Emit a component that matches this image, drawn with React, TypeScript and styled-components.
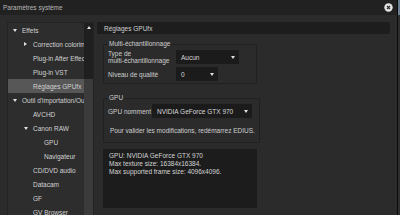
import styled, { createGlobalStyle } from "styled-components";

const Global = createGlobalStyle`
    html, body {
        margin: 0;
        padding: 0;
        background: #000;
    }
    * {
        box-sizing: border-box;
    }
`;

const Screen = styled.div`
    width: 400px;
    height: 215px;
    overflow: hidden;
    display: flex;
    font-family: "Liberation Sans", Arial, sans-serif;
    font-size: 6.5px;
    color: #cfcfcf;
`;

const Window = styled.div`
    width: 397px;
    height: 100%;
    display: flex;
    flex-direction: column;
    background: #2b2b2b;
`;

const Edge = styled.div`
    flex: 1;
    display: flex;
    flex-direction: column;
    border-left: 1px solid #0c0c0c;
    background: #2e2e2e;
`;

const EdgeSky = styled.div`
    height: 15px;
    background: #6d8093;
`;

const TitleBar = styled.div`
    height: 15px;
    flex-shrink: 0;
    display: flex;
    align-items: center;
    justify-content: space-between;
    padding: 0 4px 0 3px;
    background: #212121;
    color: #b8b8b8;
`;

const Body = styled.div`
    flex: 1;
    display: flex;
    gap: 3px;
    padding: 7px 7px 0 7px;
    min-height: 0;
`;

const Tree = styled.div`
    width: 87px;
    display: flex;
    border: 1px solid #232323;
    border-bottom: none;
    background: #2d2d2d;
`;

const TreeList = styled.div`
    flex: 1;
    min-width: 0;
    display: flex;
    flex-direction: column;
    overflow: hidden;
`;

const TreeRow = styled.div<{ $level: number; $selected?: boolean }>`
    height: 14px;
    flex-shrink: 0;
    display: flex;
    align-items: center;
    padding-left: ${(p) => 5 + p.$level * 11}px;
    white-space: nowrap;
    overflow: hidden;
    background: ${(p) => (p.$selected ? "#575757" : "transparent")};
    color: #d2d2d2;
`;

const Twisty = styled.span`
    width: 9px;
    flex-shrink: 0;
    display: flex;
    align-items: center;
`;

const Caret = styled.span<{ $dir: "down" | "right" | "up" }>`
    width: 0;
    height: 0;
    flex-shrink: 0;
    ${(p) =>
        p.$dir === "down"
            ? "border-left: 2px solid transparent; border-right: 2px solid transparent; border-top: 3px solid #e0e0e0;"
            : p.$dir === "up"
            ? "border-left: 2px solid transparent; border-right: 2px solid transparent; border-bottom: 3px solid #e0e0e0;"
            : "border-top: 2px solid transparent; border-bottom: 2px solid transparent; border-left: 3px solid #e0e0e0;"}
`;

const ScrollBar = styled.div`
    width: 9px;
    flex-shrink: 0;
    display: flex;
    flex-direction: column;
    background: #1f1f1f;
`;

const ScrollArrow = styled.div`
    height: 9px;
    display: flex;
    align-items: center;
    justify-content: center;
`;

const ScrollThumb = styled.div`
    margin-top: 47px;
    flex: 1;
    background: #3b3b3b;
`;

const Panel = styled.div`
    width: 293px;
    display: flex;
    flex-direction: column;
`;

const PanelHeader = styled.div`
    height: 12px;
    display: flex;
    align-items: center;
    padding-left: 7px;
    background: #1d1d1d;
    color: #d0d0d0;
`;

const PanelContent = styled.div`
    width: 160px;
    display: flex;
    flex-direction: column;
    padding: 6px 0 0 6px;
`;

const Group = styled.fieldset<{ $after: number }>`
    margin: 0 0 ${(p) => p.$after}px 0;
    padding: 2px 4px 2px 4px;
    border: 1px solid #202020;
    border-radius: 1px;
    display: flex;
    flex-direction: column;
    gap: 3px;
`;

const Legend = styled.legend`
    padding: 0 1px;
    margin-left: 0;
    color: #cfcfcf;
    line-height: 8px;
`;

const FormRow = styled.div<{ $labelWidth: number }>`
    display: flex;
    align-items: center;
    min-height: 14px;
    & > :first-child {
        width: ${(p) => p.$labelWidth}px;
        flex-shrink: 0;
    }
`;

const Label = styled.div`
    line-height: 7px;
    color: #cfcfcf;
    white-space: nowrap;
`;

const Select = styled.div<{ $width: number }>`
    width: ${(p) => p.$width}px;
    height: 14px;
    display: flex;
    align-items: center;
    justify-content: space-between;
    padding: 0 4px 0 5px;
    background: #1b1b1b;
    border-radius: 1px;
    color: #d8d8d8;
    white-space: nowrap;
`;

const Note = styled.div`
    height: 19px;
    display: flex;
    align-items: center;
    padding-left: 2px;
    white-space: nowrap;
    color: #cfcfcf;
`;

const InfoBox = styled.div`
    height: 59px;
    padding: 3px 6px;
    background: #1c1c1c;
    color: #d4d4d4;
    line-height: 8px;
    white-space: nowrap;
`;

const CloseIcon = () => (
    <svg width="9" height="9" viewBox="0 0 9 9">
        <circle cx="4.5" cy="4.5" r="4.2" fill="#e4e4e4" />
        <path d="M3 3 L6 6 M6 3 L3 6" stroke="#2a2a2a" strokeWidth="1.2" />
    </svg>
);

const treeItems: { label: string; level: number; caret?: "down" | "right"; selected?: boolean }[] = [
    { label: "Effets", level: 0, caret: "down" },
    { label: "Correction colorimétrie", level: 1, caret: "right" },
    { label: "Plug-in After Effects", level: 1 },
    { label: "Plug-in VST", level: 1 },
    { label: "Réglages GPUfx", level: 1, selected: true },
    { label: "Outil d'importation/Outil d'exportation", level: 0, caret: "down" },
    { label: "AVCHD", level: 1 },
    { label: "Canon RAW", level: 1, caret: "down" },
    { label: "GPU", level: 2 },
    { label: "Navigateur", level: 2 },
    { label: "CD/DVD audio", level: 1 },
    { label: "Datacam", level: 1 },
    { label: "GF", level: 1 },
    { label: "GV Browser", level: 1 },
];

export default function App() {
    return (
        <Screen>
            <Global />
            <Window>
                <TitleBar>
                    <span>Paramètres système</span>
                    <CloseIcon />
                </TitleBar>
                <Body>
                    <Tree>
                        <TreeList>
                            {treeItems.map((item) => (
                                <TreeRow key={item.label} $level={item.level} $selected={item.selected}>
                                    <Twisty>{item.caret && <Caret $dir={item.caret} />}</Twisty>
                                    {item.label}
                                </TreeRow>
                            ))}
                        </TreeList>
                        <ScrollBar>
                            <ScrollArrow>
                                <Caret $dir="up" />
                            </ScrollArrow>
                            <ScrollThumb />
                        </ScrollBar>
                    </Tree>
                    <Panel>
                        <PanelHeader>Réglages GPUfx</PanelHeader>
                        <PanelContent>
                            <Group $after={10}>
                                <Legend>Multi-échantillonnage</Legend>
                                <FormRow $labelWidth={68}>
                                    <Label>
                                        Type de
                                        <br />
                                        multi-échantillonnage
                                    </Label>
                                    <Select $width={63}>
                                        Aucun
                                        <Caret $dir="down" />
                                    </Select>
                                </FormRow>
                                <FormRow $labelWidth={68}>
                                    <Label>Niveau de qualité</Label>
                                    <Select $width={42}>
                                        0
                                        <Caret $dir="down" />
                                    </Select>
                                </FormRow>
                            </Group>
                            <Group $after={6}>
                                <Legend>GPU</Legend>
                                <FormRow $labelWidth={44}>
                                    <Label>GPU nomment</Label>
                                    <Select $width={100}>
                                        NVIDIA GeForce GTX 970
                                        <Caret $dir="down" />
                                    </Select>
                                </FormRow>
                                <Note>Pour valider les modifications, redémarrez EDIUS.</Note>
                            </Group>
                            <InfoBox>
                                GPU: NVIDIA GeForce GTX 970
                                <br />
                                Max texture size: 16384x16384.
                                <br />
                                Max supported frame size: 4096x4096.
                            </InfoBox>
                        </PanelContent>
                    </Panel>
                </Body>
            </Window>
            <Edge>
                <EdgeSky />
            </Edge>
        </Screen>
    );
}
